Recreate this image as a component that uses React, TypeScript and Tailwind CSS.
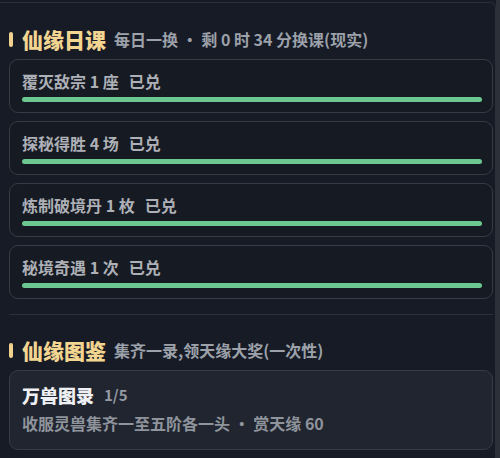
import React from "react";

const tasks = [
  { name: "覆灭敌宗 1 座", done: "已兑" },
  { name: "探秘得胜 4 场", done: "已兑" },
  { name: "炼制破境丹 1 枚", done: "已兑" },
  { name: "秘境奇遇 1 次", done: "已兑" },
];

const SectionTitle = ({ title, sub }: { title: string; sub: string }) => (
  <div className="flex items-center h-5">
    <span className="w-[4px] h-[15px] rounded-full bg-[#f0d28e] mr-[9px]" />
    <span className="text-[21px] leading-5 font-black text-[#f2d591]">{title}</span>
    <span className="ml-[8px] text-[16px] leading-5 font-bold text-[#9ca1aa]">{sub}</span>
  </div>
);

const TaskCard = ({ name, done }: { name: string; done: string }) => (
  <div className="rounded-[9px] border border-[#363b45] bg-[#161a22] pl-[12px] pr-[10px] pt-[11px] pb-[10px]">
    <div className="h-5 text-[16px] leading-5 font-bold text-[#adb0b6]">
      {name}
      <span className="ml-[10px]">{done}</span>
    </div>
    <div className="mt-[6px] h-[5px] rounded-full bg-[#6cc790]" />
  </div>
);

export default function App() {
  return (
    <div
      className="w-[500px] h-[458px] flex bg-[#171b26] overflow-hidden"
      style={{ fontFamily: '"Noto Sans CJK SC", "Noto Sans", sans-serif' }}
    >
      <div className="flex-1 pt-[2px]">
        <div className="h-full border-t border-r border-[#2a2f3a] rounded-tr-[6px] pl-[9px] pr-[2px] pt-[26px]">
          <SectionTitle title="仙缘日课" sub="每日一换 · 剩 0 时 34 分换课(现实)" />
          <div className="mt-[10px] flex flex-col gap-[8px]">
            {tasks.map((t) => (
              <TaskCard key={t.name} name={t.name} done={t.done} />
            ))}
          </div>
          <div className="mt-[15px] border-t border-[#2c313c]" />
          <div className="pt-[25px]">
            <SectionTitle title="仙缘图鉴" sub="集齐一录,领天缘大奖(一次性)" />
          </div>
          <div className="mt-[10px] rounded-[9px] border border-[#363b47] bg-[#20252f] pl-[12px] pt-[13px] pb-[16px]">
            <div className="flex items-center h-[22px]">
              <span className="text-[18px] leading-[22px] font-black text-[#eef0f3]">万兽图录</span>
              <span className="ml-[10px] text-[15px] leading-[22px] font-bold text-[#959aa3]">1/5</span>
            </div>
            <div className="mt-[7px] text-[16px] leading-5 font-bold text-[#8f949c]">
              收服灵兽集齐一至五阶各一头 · 赏天缘 60
            </div>
          </div>
        </div>
      </div>
      <div className="w-[4px] bg-[#2c3039]" />
    </div>
  );
}
